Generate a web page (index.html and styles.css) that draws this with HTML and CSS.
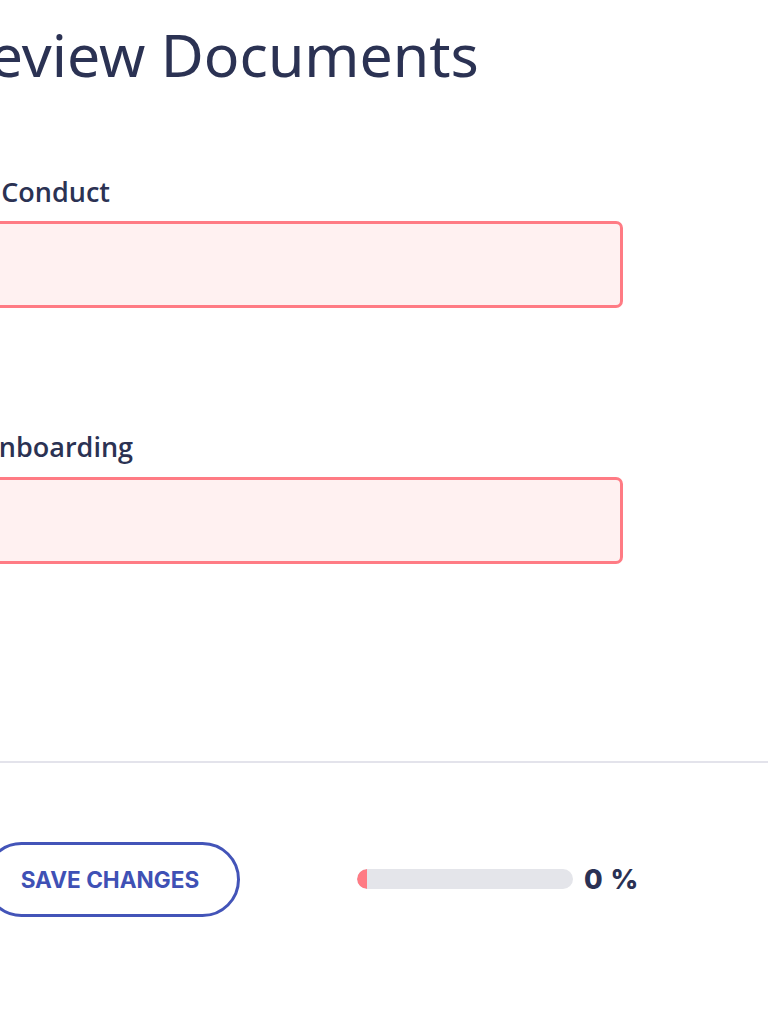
FILE: index.html
```html
<!DOCTYPE html>
<html lang="en">
<head>
<meta charset="utf-8">
<title>Review Documents</title>
<link rel="stylesheet" href="styles.css">
</head>
<body>
<main class="page">
  <h1 class="title">Review Documents</h1>
  <form class="form">
    <div class="field">
      <label class="label">Code of Conduct</label>
      <div class="input"></div>
    </div>
    <div class="field">
      <label class="label">Client Onboarding</label>
      <div class="input"></div>
    </div>
  </form>
  <hr class="divider">
  <footer class="footer">
    <button class="save" type="button">SAVE CHANGES</button>
    <div class="progress"><div class="progress-fill" style="width: 10px"></div></div>
    <span class="percent">0 %</span>
  </footer>
</main>
</body>
</html>
```

FILE: styles.css
```css
html, body {
  margin: 0;
  padding: 0;
  background: #ffffff;
  overflow: hidden;
}
body {
  width: 768px;
  height: 1024px;
  font-family: "Open Sans", "Noto Sans", sans-serif;
  color: #2b3253;
}
.page {
  margin-left: -47px;
  padding-top: 17px;
}
.title {
  margin: 0;
  font-family: "Noto Sans", "Open Sans", sans-serif;
  font-size: 59px;
  font-weight: 400;
  line-height: 74px;
  color: #2b3253;
  white-space: nowrap;
}
.form {
  margin-left: -58px;
  padding-top: 85px;
  display: flex;
  flex-direction: column;
  gap: 123px;
}
.field {
  display: flex;
  flex-direction: column;
  gap: 13px;
}
.label {
  font-size: 27px;
  font-weight: 600;
  line-height: 1.2;
  color: #2b3253;
  white-space: nowrap;
}
.input {
  box-sizing: border-box;
  width: 728px;
  height: 87px;
  border: 3px solid #ff7b84;
  border-radius: 7px;
  background: #fff1f1;
}
.divider {
  margin: 197px 0 0 47px;
  border: 0;
  height: 2px;
  background: #e3e3eb;
  width: 768px;
}
.footer {
  margin-left: 31px;
  margin-top: 79px;
  display: flex;
  align-items: center;
}
.save {
  box-sizing: border-box;
  width: 256px;
  height: 75px;
  border: 3px solid #4354b8;
  border-radius: 40px;
  background: #ffffff;
  font-family: "Inter", "Liberation Sans", sans-serif;
  font-weight: 700;
  font-size: 22.6px;
  color: #3f51b5;
  padding: 0 4px 0 0;
  text-align: center;
}
.progress {
  margin-left: 117px;
  width: 216px;
  height: 20px;
  border-radius: 10px;
  background: #e4e5ea;
  overflow: hidden;
}
.progress-fill {
  height: 100%;
  background: #ff7b84;
  border-radius: 10px 0 0 10px;
}
.percent {
  margin-left: 11px;
  font-family: "Inter", "Liberation Sans", sans-serif;
  font-weight: 800;
  font-size: 27px;
  letter-spacing: 1px;
  color: #2a3154;
}
```
